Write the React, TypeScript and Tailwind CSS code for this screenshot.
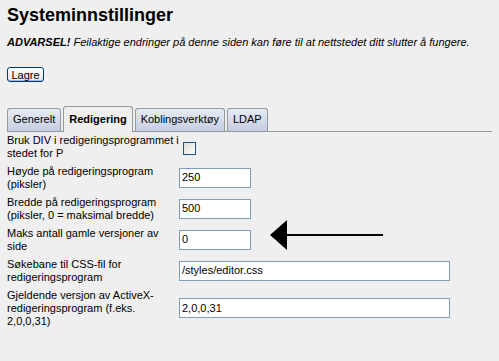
import React from "react";

const FONT = "font-['Liberation_Sans',Arial,sans-serif]";

const TABS = [
  { label: "Generelt", active: false },
  { label: "Redigering", active: true },
  { label: "Koblingsverktøy", active: false },
  { label: "LDAP", active: false },
];

type Row = {
  lines: string[];
  kind: "check" | "text";
  value?: string;
  wide?: boolean;
};

const ROWS: Row[] = [
  { lines: ["Bruk DIV i redigeringsprogrammet i", "stedet for P"], kind: "check" },
  { lines: ["Høyde på redigeringsprogram", "(piksler)"], kind: "text", value: "250" },
  { lines: ["Bredde på redigeringsprogram", "(piksler, 0 = maksimal bredde)"], kind: "text", value: "500" },
  { lines: ["Maks antall gamle versjoner av", "side"], kind: "text", value: "0" },
  { lines: ["Søkebane til CSS-fil for", "redigeringsprogram"], kind: "text", value: "/styles/editor.css", wide: true },
  {
    lines: ["Gjeldende versjon av ActiveX-", "redigeringsprogram (f.eks.", "2,0,0,31)"],
    kind: "text",
    value: "2,0,0,31",
    wide: true,
  },
];

export default function App() {
  return (
    <div className={`relative w-[499px] h-[361px] overflow-hidden bg-[#efefef] text-black ${FONT}`}>
      <div className="px-[7px] pt-[4px]">
        {/* Header */}
        <h1 className="text-[18px] leading-[22px] font-bold">Systeminnstillinger</h1>
        <p className="mt-[10px] text-[11px] leading-[13px] italic whitespace-nowrap">
          <b>ADVARSEL!</b> Feilaktige endringer på denne siden kan føre til at nettstedet ditt slutter å fungere.
        </p>

        <button className="mt-[18px] h-[15px] w-[37px] rounded-[3px] border border-[#003c74] bg-gradient-to-b from-white to-[#e6e6f0] text-[11px] leading-[12px] shadow-[inset_0_-1px_0_#9fb4e8]">
          Lagre
        </button>

        {/* Tabs */}
        <div className="mt-[20px] flex items-end gap-[2px] border-b border-[#919b9c]">
          {TABS.map((t) =>
            t.active ? (
              <div
                key={t.label}
                className="-mb-px h-[26px] px-[5px] flex items-center rounded-t-[3px] border border-b-0 border-[#919b9c] bg-[#efefef] text-[11px] font-bold"
              >
                {t.label}
              </div>
            ) : (
              <div
                key={t.label}
                className="h-[23px] px-[5px] flex items-center rounded-t-[3px] border border-b-0 border-[#919b9c] bg-gradient-to-b from-[#e6ebf5] to-[#c6cde0] text-[11px]"
              >
                {t.label}
              </div>
            )
          )}
        </div>

        {/* Settings rows */}
        <div className="mt-[2px] flex flex-col gap-[5px] text-[11px] leading-[13px]">
          {ROWS.map((r, i) => (
            <div key={i} className="flex items-center">
              <div className="w-[172px] whitespace-nowrap">
                {r.lines.map((l, j) => (
                  <div key={j}>{l}</div>
                ))}
              </div>
              {r.kind === "check" ? (
                <div className="ml-[4px] mt-[4px] w-[13px] h-[13px] border border-[#1c5180] bg-gradient-to-br from-[#dcdcd7] to-white" />
              ) : (
                <div
                  className={`h-[20px] ${r.wide ? "w-[271px]" : "w-[72px]"} border border-[#7f9db9] bg-white px-[2px] flex items-center text-[11px]`}
                >
                  {r.value}
                </div>
              )}
            </div>
          ))}
        </div>
      </div>

      {/* Annotation arrow */}
      <svg className="absolute left-[268px] top-[218px]" width="118" height="34" viewBox="0 0 118 34">
        <polygon points="2,17 19,2 19,32" fill="black" />
        <rect x="18" y="16" width="97" height="2" fill="black" />
      </svg>
    </div>
  );
}
